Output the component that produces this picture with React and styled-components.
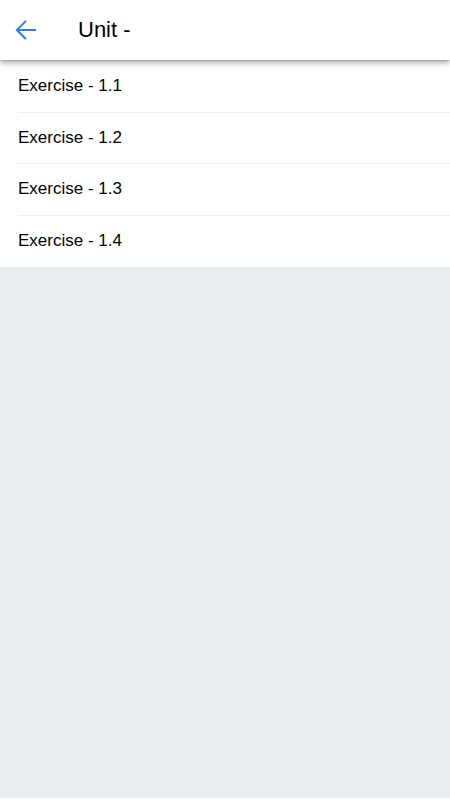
import React from "react";
import styled, { createGlobalStyle } from "styled-components";

const GlobalStyle = createGlobalStyle`
  html, body {
    margin: 0;
    padding: 0;
    background: #ffffff;
    font-family: "Liberation Sans", Arial, sans-serif;
  }
`;

const Page = styled.div`
  display: flex;
  flex-direction: column;
  height: 798px;
  background-color: #e9edf0;
`;

const Header = styled.header`
  display: flex;
  align-items: center;
  height: 60px;
  margin-bottom: 1px;
  background: #ffffff;
  box-shadow: 0 2px 4px -1px rgba(0, 0, 0, 0.2), 0 4px 5px 0 rgba(0, 0, 0, 0.14),
    0 1px 10px 0 rgba(0, 0, 0, 0.12);
  position: relative;
  z-index: 2;
`;

const BackButton = styled.button`
  display: flex;
  align-items: center;
  justify-content: center;
  width: 30px;
  height: 30px;
  margin-left: 11px;
  padding: 0;
  border: none;
  background: none;
  color: #2f7cf6;
  cursor: pointer;
`;

const Title = styled.h1`
  margin: 0 0 0 37px;
  font-size: 22px;
  font-weight: 400;
  color: #000000;
`;

const List = styled.ul`
  list-style: none;
  margin: 0;
  padding: 0 0 0 18px;
  background: #ffffff;
`;

const Item = styled.li`
  display: flex;
  align-items: center;
  box-sizing: border-box;
  height: 51.5px;
  font-size: 17px;
  color: #000000;
  border-bottom: ${(props) => (props.last ? "none" : "1px solid #efefef")};
`;

const units = ["Exercise - 1.1", "Exercise - 1.2", "Exercise - 1.3", "Exercise - 1.4"];

function BackArrow() {
  return (
    <svg width="30" height="30" viewBox="0 0 512 512">
      <polyline
        points="244 400 100 256 244 112"
        fill="none"
        stroke="currentColor"
        strokeLinecap="square"
        strokeWidth="34"
      />
      <line
        x1="120"
        y1="256"
        x2="412"
        y2="256"
        stroke="currentColor"
        strokeLinecap="square"
        strokeWidth="34"
      />
    </svg>
  );
}

export default function App() {
  return (
    <>
      <GlobalStyle />
      <Page>
        <Header>
          <BackButton aria-label="back">
            <BackArrow />
          </BackButton>
          <Title>Unit -</Title>
        </Header>
        <List>
          {units.map((name, index) => (
            <Item key={name} last={index === units.length - 1}>
              {name}
            </Item>
          ))}
        </List>
      </Page>
    </>
  );
}
